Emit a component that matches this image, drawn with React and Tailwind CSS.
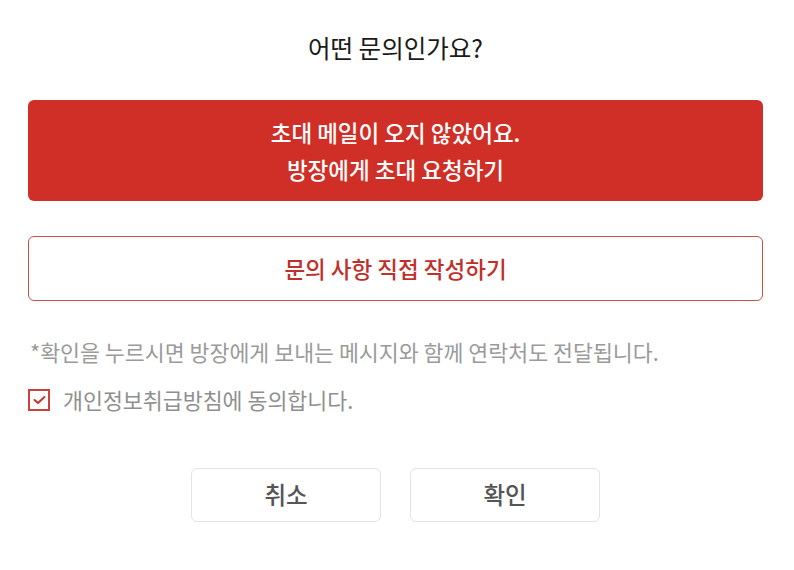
import React, { useState } from "react";

const font = { fontFamily: '"Noto Sans CJK KR", "Noto Sans", sans-serif' };

const InquiryDialog = () => {
  const [agree, setAgree] = useState(true);

  return (
    <div className="w-[794px] h-[570px] bg-white" style={font}>
      <div className="flex flex-col pl-[28px] w-[763px]">
        {/* 제목 */}
        <h1 className="h-[100px] flex items-center justify-center text-[24.5px] text-[#1a1a1a] pb-[4px]">
          어떤 문의인가요?
        </h1>

        {/* 초대 요청 버튼 */}
        <button className="h-[101px] w-full rounded-[6px] bg-[#d02f27] text-white text-[22.5px] font-medium leading-[37px] flex flex-col items-center justify-center">
          <span>초대 메일이 오지 않았어요.</span>
          <span>방장에게 초대 요청하기</span>
        </button>

        {/* 직접 작성 버튼 */}
        <button className="mt-[35px] h-[65px] w-full rounded-[6px] border border-[#c9514c] bg-white text-[#c0302a] text-[22.5px] font-medium">
          문의 사항 직접 작성하기
        </button>

        <p className="mt-[36px] pl-[2px] text-[21.7px] text-[#9a9a9a] leading-[30px]">
          *확인을 누르시면 방장에게 보내는 메시지와 함께 연락처도 전달됩니다.
        </p>

        {/* 동의 체크 */}
        <label className="mt-[18px] flex items-center gap-[13px] cursor-pointer">
          <span
            onClick={() => setAgree(!agree)}
            className="w-[22px] h-[22px] border-2 border-[#c9423c] flex items-center justify-center"
          >
            {agree && (
              <svg width="13" height="10" viewBox="0 0 13 10" fill="none">
                <path d="M1.5 5 L5 8 L11.5 2" stroke="#c9302a" strokeWidth="2" strokeLinecap="round" strokeLinejoin="round" />
              </svg>
            )}
          </span>
          <span className="text-[21.7px] text-[#8f8f8f] leading-[30px]">개인정보취급방침에 동의합니다.</span>
        </label>

        <div className="mt-[53px] flex justify-center gap-[29px]">
          <button className="w-[190px] h-[54px] rounded-[6px] border border-[#e3e3e3] text-[23.5px] font-medium text-[#555555]">
            취소
          </button>
          <button className="w-[190px] h-[54px] rounded-[6px] border border-[#e3e3e3] text-[23.5px] font-medium text-[#555555]">
            확인
          </button>
        </div>
      </div>
    </div>
  );
};

export default function App() {
  return <InquiryDialog />;
}
